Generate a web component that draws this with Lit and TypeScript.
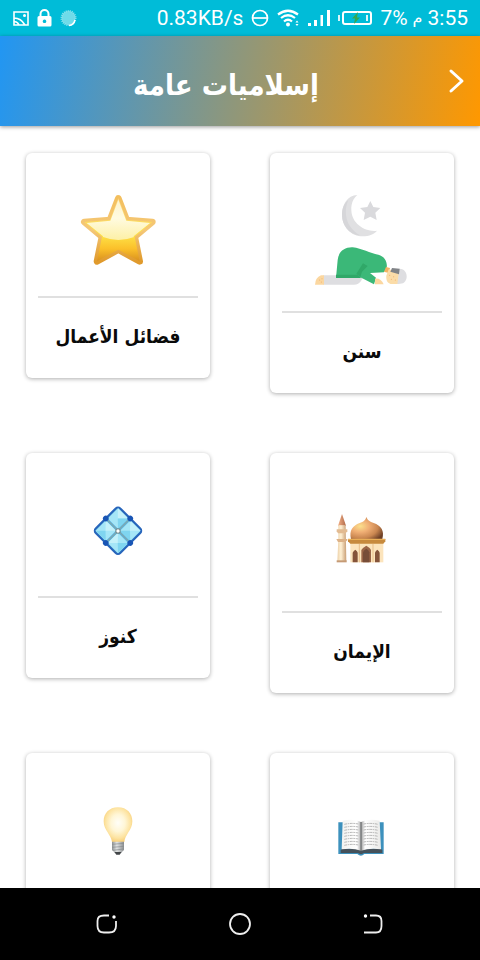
import { LitElement, html, svg, css } from "lit";
import { customElement } from "lit/decorators.js";

const star = html`<svg class="icon" viewBox="144 108 300 300" aria-hidden="true">
  <defs>
    <linearGradient id="gold" x1="0" y1="0" x2="0" y2="1">
      <stop offset="0" stop-color="#fbd98a" /><stop offset=".6" stop-color="#fddf45" />
      <stop offset=".8" stop-color="#fbc02a" /><stop offset="1" stop-color="#d9901f" />
    </linearGradient>
    <linearGradient id="edge" x1="0" y1="0" x2="0" y2="1">
      <stop offset="0" stop-color="#f3bf5e" /><stop offset=".5" stop-color="#f5c878" /><stop offset="1" stop-color="#e09a2c" />
    </linearGradient>
    <linearGradient id="shine" x1="0" y1="0" x2="0" y2="1">
      <stop offset="0" stop-color="#fdf0c4" /><stop offset=".55" stop-color="#fffbe0" /><stop offset="1" stop-color="#fdf0a6" />
    </linearGradient>
    <clipPath id="starClip"><path d="M295 164 L319 227 L390 234 L341 274 L356 344 L295 313 L234 344 L249 274 L200 234 L271 227Z" /></clipPath>
  </defs>
  <path d="M295 160 L320 225 L397 231 L344 275 L359 349 L295 314 L231 349 L246 275 L193 231 L270 225Z"
    fill="url(#gold)" stroke="url(#edge)" stroke-width="20" stroke-linejoin="round" />
  <path d="M295 160 L320 225 L397 231 L344 275 L359 349 L295 314 L231 349 L246 275 L193 231 L270 225Z" fill="url(#gold)" />
  <path d="M180 140 H410 V235 Q350 285 295 285 Q240 285 180 230Z" fill="url(#shine)" clip-path="url(#starClip)" />
</svg>`;

const prayer = html`<svg class="icon tall" viewBox="156 108 300 345" aria-hidden="true">
  <path d="M292 150 C262 151 246 180 246 209 C246 246 275 274 308 274 C328 274 343 267 351 257 C318 262 275 238 274 195 C273 174 281 160 292 150Z" fill="#e0e0e2" />
  <path d="M265 165 C250 200 256 245 300 271 C266 268 246 240 246 209 C246 190 253 174 265 165Z" fill="#d6d6d9" />
  <path d="M331 168 L340 186 L361 189 L346 203 L350 225 L331 215 L311 225 L315 203 L300 189 L322 186Z" fill="#dadadd" />
  <path d="M190 391 H312 L303 408 Q296 419 282 419 H190Z" fill="#dedee1" />
  <path d="M165 419 Q166 398 183 391 H192 V419Z" fill="#fbd7a0" />
  <path d="M228 399 L233 345 C236 318 255 306 278 307 C306 310 330 325 355 329 C375 334 383 352 380 369 L372 382 L330 384 L348 398 L342 418 L301 397 V399Z" fill="#3bb878" />
  <path d="M228 389 H292 L303 399 H228Z" fill="#30a868" />
  <path d="M309 355 L289 386 L301 396 L306 380 L323 363Z" fill="#30a868" />
  <path d="M345 401 Q363 399 371 418 H345Z" fill="#fbd7a0" />
  <path d="M378 366 L390 369 L386 384 L372 380Z" fill="#f3b263" />
  <path d="M386 373 L418 382 L414 417 H397 C381 417 378 404 379 392Z" fill="#fbdca8" />
  <path d="M416 371 C435 370 441 385 440 397 C438 413 428 418 412 417 L416 388Z" fill="#dedee1" />
  <path d="M396 369 L419 371 L417 388 L391 380Z" fill="#808387" />
  <g fill="#eda765">
    <circle cx="179" cy="405" r="1.5" /><circle cx="186" cy="401" r="1.5" /><circle cx="184" cy="411" r="1.5" />
    <circle cx="389" cy="391" r="1.5" /><circle cx="401" cy="395" r="1.5" /><circle cx="394" cy="403" r="1.5" /><circle cx="406" cy="405" r="1.5" />
  </g>
</svg>`;

const diamond = html`<svg class="icon" viewBox="-36 -27 300 300" aria-hidden="true">
  <g transform="translate(114 122) rotate(45) scale(1.06) translate(-114 -122)">
    <rect x="65" y="73" width="98" height="98" rx="9" fill="#5cb2dc" stroke="#2765bb" stroke-width="6" />
    <g fill="#a5e6f7">
      <rect x="69" y="77" width="41" height="41" /><rect x="118" y="77" width="41" height="41" />
      <rect x="69" y="126" width="41" height="41" /><rect x="118" y="126" width="41" height="41" />
    </g>
    <g fill="#c4f1fa">
      <path d="M69 77 H110 L89 98Z" /><path d="M118 77 H159 L138 98Z" />
      <path d="M69 126 H110 L89 147Z" /><path d="M118 126 V167 L138 147Z" />
    </g>
    <g fill="#7fd5f0">
      <path d="M110 77 V118 L89 98Z" /><path d="M118 118 H159 L138 98Z" />
      <path d="M69 167 H110 L89 147Z" /><path d="M159 126 V167 L138 147Z" />
    </g>
    <path d="M114 77 V167 M69 122 H159" stroke="#83a7aa" stroke-width="3" />
    <g fill="#1855b5">
      <circle cx="114" cy="73" r="8" /><circle cx="114" cy="171" r="8" /><circle cx="65" cy="122" r="8" /><circle cx="163" cy="122" r="8" />
    </g>
  </g>
  <circle cx="114" cy="123" r="8" fill="#738b8d" /><circle cx="114" cy="123" r="5" fill="#fff" />
</svg>`;

const mosque = html`<svg class="icon tall" viewBox="-24 -57 300 345" aria-hidden="true">
  <defs>
    <radialGradient id="dome" cx=".3" cy=".42" r=".78">
      <stop offset="0" stop-color="#fbe08c" /><stop offset=".35" stop-color="#f0ae74" />
      <stop offset=".7" stop-color="#c98650" /><stop offset="1" stop-color="#6e4026" />
    </radialGradient>
    <linearGradient id="tower" x1="0" y1="0" x2="1" y2="0">
      <stop offset="0" stop-color="#ecd0a8" /><stop offset=".4" stop-color="#fff1d4" /><stop offset="1" stop-color="#c99f76" />
    </linearGradient>
    <linearGradient id="spire" x1="0" y1="0" x2="1" y2="0">
      <stop offset="0" stop-color="#f3b088" /><stop offset="1" stop-color="#b06a48" />
    </linearGradient>
  </defs>
  <path d="M66 42 L78 77 H54Z" fill="url(#spire)" />
  <path d="M55 76 H77 L79 184 H52 L55 118Z" fill="url(#tower)" />
  <path d="M50 88 H82 V94 L77 100 H54 L50 94Z" fill="#e2bb92" />
  <path d="M49 117 H82 V121 L76 126 H54Z" fill="#ddb287" />
  <path d="M50 181 H80 V187 H50Z" fill="#c59a75" />
  <rect x="91" y="126" width="99" height="61" fill="#fce4bc" />
  <path d="M93 117 C87 91 98 77 119 69 C131 65 136 61 139 51 C143 61 149 65 161 69 C183 77 194 92 187 117Z" fill="url(#dome)" />
  <path d="M84 117 H196 V124 L190 131 H91 L84 124Z" fill="#c78a3d" />
  <path d="M84 116 H196 V120 H84Z" fill="#e9ae57" />
  <path d="M124 187 V150 Q128 143 139 137 Q150 143 153 150 V187Z" fill="#9a6547" />
  <path d="M129 187 V157 Q132 150 139 146 Q146 150 148 157 V187Z" fill="#774d38" />
  <path d="M98 187 V158 Q101 152 106 149 Q112 153 113 158 V187Z M165 187 V158 Q167 152 172 149 Q178 153 179 158 V187Z" fill="#85543a" />
  <path d="M118 132 V187 M159 132 V187" stroke="#e8bf8a" stroke-width="3" />
</svg>`;

const bulb = html`<svg class="icon" viewBox="-36 -27 300 300" aria-hidden="true">
  <defs>
    <radialGradient id="glow" cx=".5" cy=".45" r=".55">
      <stop offset="0" stop-color="#fffef8" /><stop offset=".45" stop-color="#fff6d6" />
      <stop offset=".8" stop-color="#fde3a0" /><stop offset="1" stop-color="#f8d07c" />
    </radialGradient>
    <linearGradient id="cap" x1="0" y1="0" x2="1" y2="0">
      <stop offset="0" stop-color="#8e9293" /><stop offset=".4" stop-color="#e2e4e4" /><stop offset="1" stop-color="#8a8d8f" />
    </linearGradient>
  </defs>
  <path d="M114 52 C87 52 71 71 71 94 C71 121 93 133 96 156 H133 C135 133 157 121 157 94 C157 71 141 52 114 52Z" fill="url(#glow)" />
  <path d="M96 155 H132 V180 L125 187 H103 L96 180Z" fill="url(#cap)" />
  <path d="M96 163 L132 160 M96 172 L132 169 M98 181 L131 177" stroke="#858a8c" stroke-width="2" />
  <path d="M103 186 H125 L119 194 H109Z" fill="#424548" />
</svg>`;

const bookLines = [73, 82, 91, 100, 109, 118, 127, 136];
const book = html`<svg class="icon tall" viewBox="-24 -57 300 345" aria-hidden="true">
  <defs>
    <linearGradient id="pageL" x1="0" y1="0" x2="1" y2="0">
      <stop offset="0" stop-color="#f3f3f0" /><stop offset=".8" stop-color="#fff" /><stop offset="1" stop-color="#aaa" />
    </linearGradient>
    <linearGradient id="pageR" x1="0" y1="0" x2="1" y2="0">
      <stop offset="0" stop-color="#999" /><stop offset=".2" stop-color="#fff" /><stop offset="1" stop-color="#eaeae8" />
    </linearGradient>
  </defs>
  <path d="M55 67 H191 V162 H133 Q123 172 112 162 H55Z" fill="#3d91bd" />
  <path d="M62 150 L68 146 H181 L187 150 V159 H132 Q123 166 114 159 H62Z" fill="#45515a" />
  <path d="M68 62 Q102 55 123 66 V152 Q98 143 65 148Z" fill="url(#pageL)" />
  <path d="M123 66 Q146 55 179 62 L183 148 Q150 143 123 152Z" fill="url(#pageR)" />
  ${bookLines.map(
    (y) => svg`<path d="M73 ${y} Q96 ${y - 5} 115 ${y - 1} M131 ${y - 1} Q152 ${y - 5} 174 ${y}" fill="none" stroke="#959595" stroke-width="2" stroke-dasharray="8 2 5 2" />`
  )}
  <path d="M123 66 V153" stroke="#65696a" stroke-width="3" />
</svg>`;

const topics = [
  { label: "سنن", icon: prayer },
  { label: "فضائل الأعمال", icon: star },
  { label: "الإيمان", icon: mosque },
  { label: "كنوز", icon: diamond },
  { label: "", icon: book },
  { label: "", icon: bulb },
];

@customElement("status-bar")
class StatusBar extends LitElement {
  static styles = css`
    :host { display: flex; align-items: center; justify-content: space-between; height: 36px; padding: 0 12px; background: #00bcd8; color: #fff; font: 21px/36px Roboto, "DejaVu Sans", sans-serif; direction: ltr; }
    .group { display: flex; align-items: center; gap: 8px; }
    .time { display: flex; gap: 5px; }
    .period { font-family: "DejaVu Sans", sans-serif; font-size: 16px; }
    svg { display: block; fill: none; stroke: #fff; stroke-width: 2; }
    .solid { fill: #fff; stroke: none; }
  `;
  render() {
    return html`
      <div class="group">
        <svg width="17" height="18" viewBox="0 0 17 18"><path d="M2 3H16V16H2Z M2 9Q9 9 13 16 M2 13Q5 12 7 16" stroke-width="1.6" /><circle class="solid" cx="12.5" cy="6.5" r="1.5" /></svg>
        <svg width="15" height="18" viewBox="0 0 15 18"><path d="M3.5 8V5a4 4 0 0 1 8 0V8" /><path class="solid" fill-rule="evenodd" d="M2 7H13Q14.500 7 14.500 8.500V16Q14.500 17.500 13 17.500H2Q.500 17.500 .500 16V8.500Q.500 7 2 7Z M7.500 10.500a1.800 1.800 0 1 0 .01 0Z" /></svg>
        <svg width="17" height="18" viewBox="0 0 17 18"><circle cx="8.500" cy="9" r="7" fill="#6fdbe9" stroke="#8be2ed" stroke-dasharray="1 1" /><path d="M15 11A7 7 0 0 1 9 16.500" stroke-width="1.500" /></svg>
      </div>
      <div class="group">
        <span>0.83KB/s</span>
        <svg width="18" height="18" viewBox="0 0 18 18"><circle cx="9" cy="9" r="7.500" stroke-width="1.700" /><path d="M2 9H16" stroke-width="1.700" /></svg>
        <svg width="23" height="18" viewBox="0 0 23 18"><path d="M1 5.500Q11 -2 21 5.500 M4 9Q11 3.500 18 9 M7 12.500Q11 9 15 12.500" stroke-width="2.200" /><circle class="solid" cx="11" cy="15.500" r="2" /><path class="solid" d="M18.500 13.500L20 11.500L21.500 13.500Z M18.500 15L20 17L21.500 15Z" /></svg>
        <svg width="22" height="18" viewBox="0 0 22 18"><path class="solid" d="M0 14H3V17H0Z M6 11H9V17H6Z M12.500 6H15V17H12.500Z M19 1H22V17H19Z" /></svg>
        <svg width="34" height="18" viewBox="0 0 34 18"><rect x="5" y="3" width="28" height="12" rx="2" /><path d="M1 6V12 M29 6V12" stroke-width="1.700" /><path d="M20 3L14 9.500H17L16 15L22 8.500H19Z" fill="#36a853" stroke="none" /></svg>
        <div class="time"><span>7%</span><span class="period">م</span><span>3:55</span></div>
      </div>`;
  }
}

@customElement("topic-card")
class TopicCard extends LitElement {
  static properties = { label: {}, icon: { attribute: false } };
  declare label: string;
  declare icon: unknown;
  static styles = css`
    :host { display: block; }
    .card { display: flex; flex-direction: column; padding: 28px 12px 0; border-radius: 6px; background: #fff; box-shadow: 0 1px 4px rgba(0, 0, 0, 0.32); color: #0a0a0a; text-decoration: none; }
    .icon { display: block; width: 100px; height: 100px; align-self: center; }
    .icon.tall { height: 115px; }
    .label { margin-top: 15px; border-top: 2px solid #e0e0e0; height: 80px; font: bold 19px/76px "DejaVu Sans Condensed", "DejaVu Sans", sans-serif; text-align: center; white-space: nowrap; }
  `;
  render() {
    return html`<a class="card" href="#">${this.icon}<span class="label">${this.label}</span></a>`;
  }
}

@customElement("nav-bar")
class NavBar extends LitElement {
  static styles = css`
    :host { display: flex; align-items: center; justify-content: center; gap: 86px; height: 72px; background: #000; direction: ltr; }
    button { display: flex; justify-content: center; width: 48px; padding: 12px 0; border: 0; background: none; }
    svg { display: block; fill: none; stroke: #eee; stroke-width: 1.8; }
    .dot { fill: #fff; stroke: none; }
  `;
  render() {
    return html`
      <button aria-label="Recent apps"><svg width="24" height="24" viewBox="0 0 24 24"><path d="M15 3.500H10Q3.500 3.500 3.500 9V14Q3.500 20.500 10 20.500H15Q22 20.500 22 14V9" /><circle class="dot" cx="20" cy="5" r="1.700" /></svg></button>
      <button aria-label="Home"><svg width="24" height="24" viewBox="0 0 24 24"><circle cx="12" cy="12" r="10" /></svg></button>
      <button aria-label="Back"><svg width="24" height="24" viewBox="0 0 24 24"><path d="M8 3.500H14Q19.500 3.500 19.500 9V14Q19.500 20.500 14 20.500H2" /><circle class="dot" cx="3.500" cy="4" r="1.700" /></svg></button>`;
  }
}

@customElement("app-root")
class AppRoot extends LitElement {
  static styles = css`
    :host { display: flex; flex-direction: column; height: 100vh; background: #fff; direction: rtl; }
    header { display: flex; align-items: center; flex: none; height: 90px; background: linear-gradient(100deg, #2196f3, #ff9800); box-shadow: 0 1px 4px rgba(0, 0, 0, 0.4); color: #fff; }
    .back { flex: none; width: 48px; padding: 0; border: 0; background: none; color: inherit; }
    .back svg { display: block; }
    h1 { flex: 1; margin: 0; padding: 8px 0 0 20px; font: bold 29px/48px "DejaVu Sans Condensed", "DejaVu Sans", sans-serif; text-align: center; white-space: nowrap; }
    main { flex: 1; min-height: 0; overflow: hidden; display: grid; grid-template-columns: 1fr 1fr; grid-auto-rows: max-content; align-items: start; gap: 60px; padding: 27px 26px 0; }
    status-bar, nav-bar { flex: none; }
  `;
  render() {
    return html`
      <status-bar></status-bar>
      <header>
        <button class="back" aria-label="رجوع"><svg width="48" height="48" viewBox="0 0 48 48"><path d="M19 14L30 24L19 34" fill="none" stroke="#fff" stroke-width="3" stroke-linecap="round" stroke-linejoin="round" /></svg></button>
        <h1>إسلاميات عامة</h1>
      </header>
      <main>${topics.map((t) => html`<topic-card .label=${t.label} .icon=${t.icon}></topic-card>`)}</main>
      <nav-bar></nav-bar>`;
  }
}
